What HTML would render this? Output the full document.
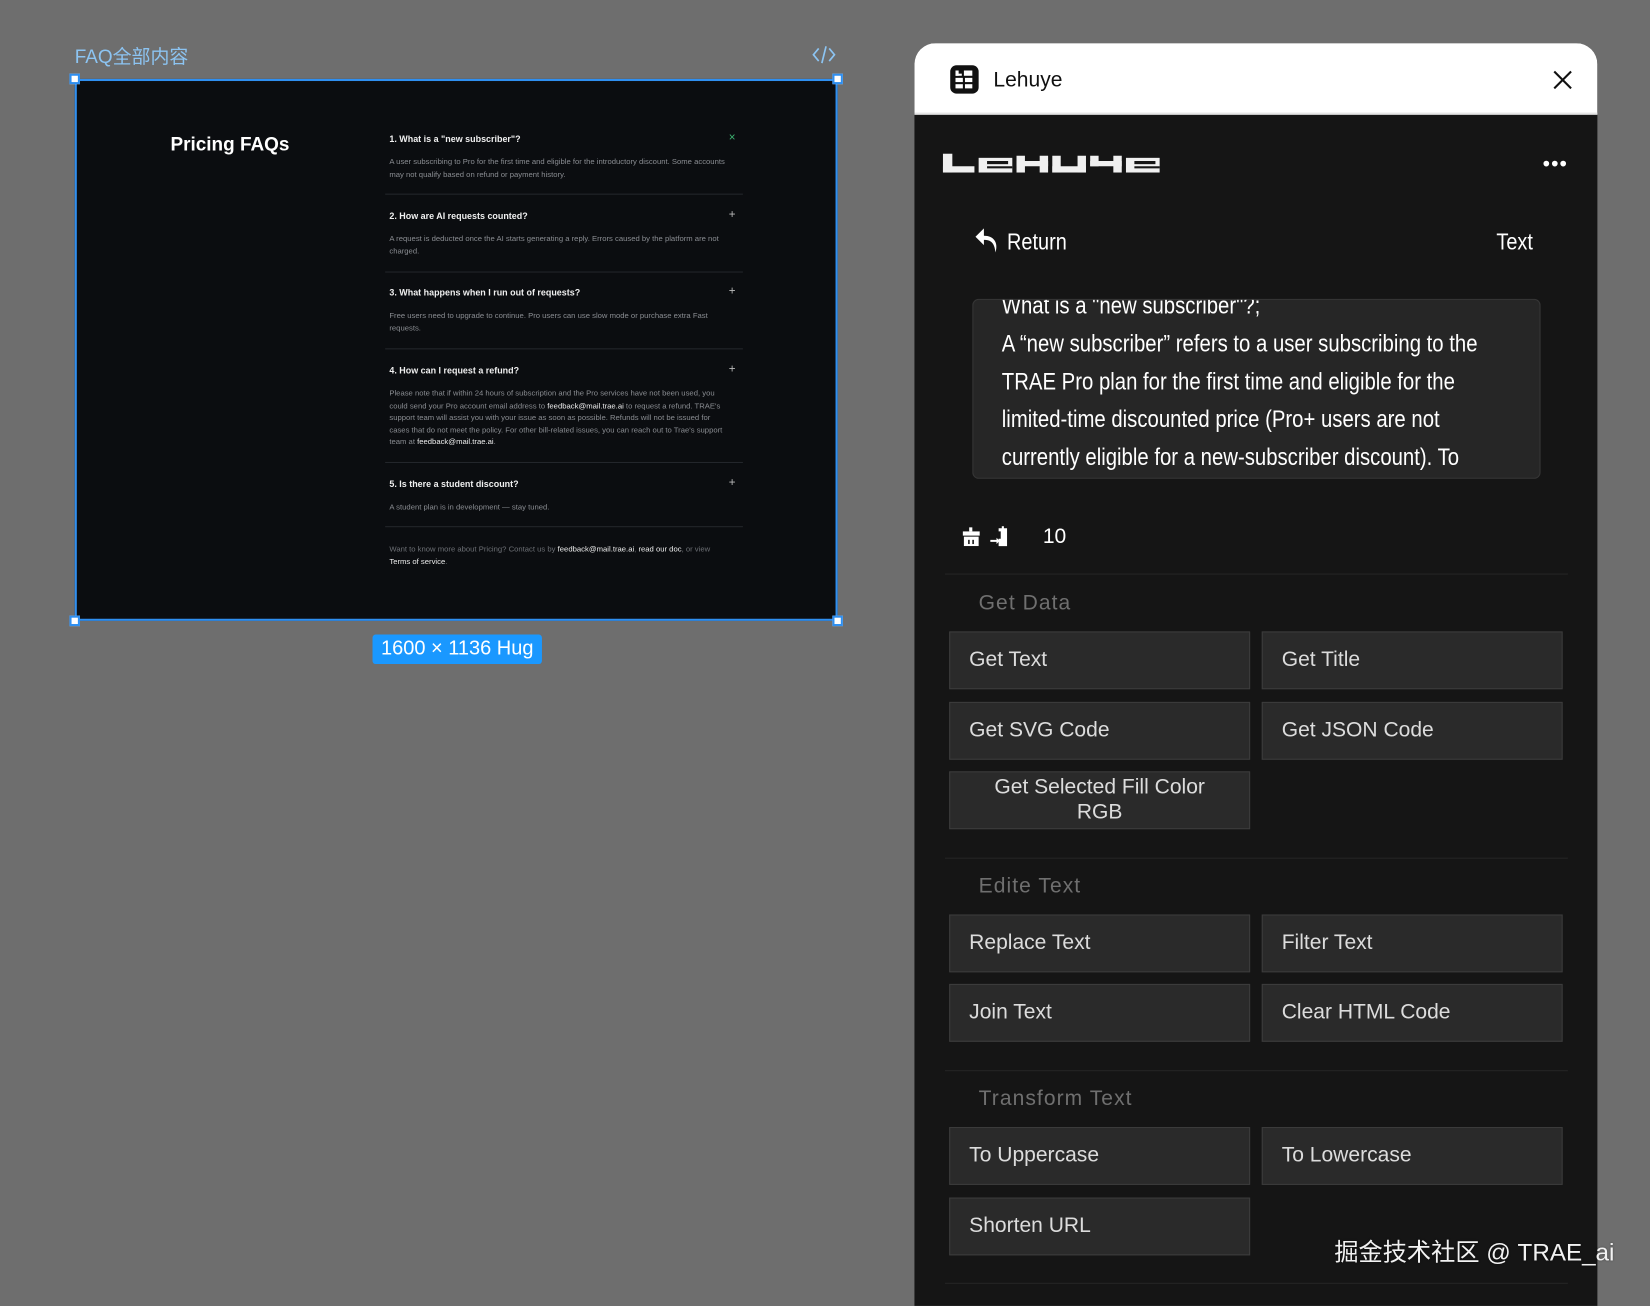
<!DOCTYPE html>
<html><head><meta charset="utf-8">
<style>
*{margin:0;padding:0;box-sizing:border-box}
html,body{width:1650px;height:1294px;overflow:hidden;background:#6e6e6e}
#w{position:absolute;left:0;top:0;width:1568px;height:1230px;transform:scale(1.05230);transform-origin:0 0;font-family:"Liberation Sans",Arial,sans-serif}
.a{position:absolute}
.lbl{left:71px;top:40px;color:#8cc4f2;font-size:18px;font-family:"Liberation Sans","Noto Sans CJK SC",sans-serif}
.frame{left:71px;top:75px;width:725px;height:515px;background:#0b0d10;border:2px solid #2f8ff0}
.h{width:10px;height:10px;background:#fff;border:2px solid #2f8ff0}
.q{position:absolute;left:297px;width:335px;font-size:8.5px;color:#f0f0f0;font-weight:bold}
.q .p{position:absolute;right:6px;top:-2px;font-weight:normal;font-size:11px;color:#bbb}
.an{position:absolute;left:297px;width:326px;font-size:7.3px;line-height:11.5px;color:#8a8d92}
.an b{color:#eee;font-weight:normal}
.dv{position:absolute;left:293px;width:340px;height:1px;background:#23262b}
.panel{left:869px;top:41px;width:649px;height:1200px;background:#151515;border-radius:20px 20px 0 0;overflow:hidden}
.hdr{position:absolute;left:0;top:0;width:649px;height:68px;background:#fff;border-bottom:2px solid #e6e6e6}
.btn{position:absolute;width:286px;height:55px;background:#2a2a2a;border:1px solid #3c3c3c;color:#dcdcdc;font-size:20px;line-height:53px;padding-left:18px}
.sec{position:absolute;left:61px;color:#6f6f6f;font-size:20px;letter-spacing:1px}
.hr{position:absolute;left:29px;width:592px;height:1px;background:#252525}
.nar{display:inline-block;transform:scaleX(0.86);transform-origin:0 0}
</style></head><body><div id="w">
<div class="a lbl">FAQ全部内容</div>
<svg class="a" style="left:771px;top:42px" width="24" height="20" viewBox="0 0 24 20" fill="none" stroke="#8cc4f2" stroke-width="1.6"><path d="M7 4 2 10l5 6M17 4l5 6-5 6M14 2 10 18"/></svg>
<div class="a frame">
 <div class="a" style="left:89px;top:50px;color:#fff;font-size:18px;font-weight:bold">Pricing FAQs</div>
 <div class="q" style="top:50px">1. What is a "new subscriber"?<span class="p" style="color:#3cb371">×</span></div>
 <div class="an" style="top:71px">A user subscribing to Pro for the first time and eligible for the introductory discount. Some accounts may not qualify based on refund or payment history.</div>
 <div class="dv" style="top:107px"></div>
 <div class="q" style="top:123px">2. How are AI requests counted?<span class="p">+</span></div>
 <div class="an" style="top:144px">A request is deducted once the AI starts generating a reply. Errors caused by the platform are not charged.</div>
 <div class="dv" style="top:181px"></div>
 <div class="q" style="top:196px">3. What happens when I run out of requests?<span class="p">+</span></div>
 <div class="an" style="top:217px">Free users need to upgrade to continue. Pro users can use slow mode or purchase extra Fast requests.</div>
 <div class="dv" style="top:254px"></div>
 <div class="q" style="top:270px">4. How can I request a refund?<span class="p">+</span></div>
 <div class="an" style="top:291px">Please note that if within 24 hours of subscription and the Pro services have not been used, you could send your Pro account email address to <b>feedback@mail.trae.ai</b> to request a refund. TRAE's support team will assist you with your issue as soon as possible. Refunds will not be issued for cases that do not meet the policy. For other bill-related issues, you can reach out to Trae's support team at <b>feedback@mail.trae.ai</b>.</div>
 <div class="dv" style="top:362px"></div>
 <div class="q" style="top:378px">5. Is there a student discount?<span class="p">+</span></div>
 <div class="an" style="top:399px">A student plan is in development — stay tuned.</div>
 <div class="dv" style="top:423px"></div>
 <div class="an" style="top:439px;color:#6d7075">Want to know more about Pricing? Contact us by <b>feedback@mail.trae.ai</b>, <b>read our doc</b>, or view <b>Terms of service</b>.</div>
</div>
<div class="a h" style="left:66px;top:70px"></div><div class="a h" style="left:791px;top:70px"></div>
<div class="a h" style="left:66px;top:585px"></div><div class="a h" style="left:791px;top:585px"></div>
<div class="a" style="left:354px;top:603px;width:161px;height:28px;background:#1a98ff;border-radius:3px;color:#fff;font-size:19px;line-height:28px;text-align:center">1600 × 1136 Hug</div>

<div class="a panel">
 <div class="hdr">
  <div class="a" style="left:34px;top:21px;width:27px;height:27px;background:#111;border-radius:6px"></div>
  <svg class="a" style="left:37px;top:24px" width="21" height="21" viewBox="0 0 21 21" fill="#fff"><rect x="2" y="2" width="3" height="5"/><rect x="2" y="5" width="6" height="2"/><rect x="10" y="2" width="8" height="5"/><rect x="2" y="9" width="7" height="4"/><rect x="11" y="9" width="7" height="4"/><rect x="2" y="15" width="7" height="4"/><rect x="11" y="15" width="7" height="4"/></svg>
  <div class="a" style="left:75px;top:24px;font-size:20px;color:#111">Lehuye</div>
  <svg class="a" style="left:606px;top:25px" width="20" height="20" viewBox="0 0 20 20" stroke="#111" stroke-width="2"><path d="M2 2 18 18M18 2 2 18"/></svg>
 </div>
 <svg class="a" style="left:27px;top:105px" width="207" height="18" viewBox="0 0 207 18" fill="#f0f0f0">
  <rect x="0" y="0" width="9" height="18"/><rect x="0" y="12" width="30" height="6"/>
  <rect x="34" y="4" width="32" height="14"/><rect x="42" y="7" width="20" height="3" fill="#151515"/><rect x="42" y="12" width="24" height="2" fill="#151515"/>
  <rect x="70" y="2" width="8" height="16"/><rect x="70" y="7" width="30" height="5"/><rect x="92" y="2" width="8" height="16"/>
  <rect x="104" y="2" width="8" height="16"/><rect x="104" y="12" width="32" height="6"/><rect x="128" y="2" width="8" height="16"/>
  <rect x="140" y="2" width="8" height="10"/><rect x="140" y="7" width="30" height="5"/><rect x="162" y="2" width="8" height="16"/>
  <rect x="174" y="4" width="32" height="14"/><rect x="182" y="7" width="20" height="3" fill="#151515"/><rect x="182" y="12" width="24" height="2" fill="#151515"/>
 </svg>
 <div class="a" style="left:597px;top:104px;color:#fff;font-size:20px;letter-spacing:1px">•••</div>
 <svg class="a" style="left:57px;top:175px" width="24" height="26" viewBox="0 0 24 26" fill="#fff"><path d="M9 1 1 9l8 8v-5c6 0 10 2 11 12 3-10-2-16-11-16V1z"/></svg>
 <div class="a" style="left:88px;top:176px;color:#fff;font-size:22px"><span class="nar">Return</span></div>
 <div class="a" style="left:553px;top:176px;color:#fff;font-size:22px"><span class="nar">Text</span></div>
 <div class="a" style="left:55px;top:243px;width:540px;height:171px;background:#262626;border:1px solid #363636;border-radius:6px;overflow:hidden">
  <div style="position:absolute;left:27px;top:-13px;width:540px;color:#fff;font-size:23px;line-height:36px;transform:scaleX(0.84);transform-origin:0 0">What is a "new subscriber"?;<br>A “new subscriber” refers to a user subscribing to the<br>TRAE Pro plan for the first time and eligible for the<br>limited-time discounted price (Pro+ users are not<br>currently eligible for a new-subscriber discount). To</div>
 </div>
 <svg class="a" style="left:45px;top:460px" width="18" height="18" viewBox="0 0 18 18" fill="#fff"><rect x="7" y="0" width="3" height="4"/><rect x="1" y="4" width="16" height="4"/><rect x="2" y="9" width="14" height="9"/><rect x="6" y="12" width="1.5" height="4" fill="#151515"/><rect x="10" y="12" width="1.5" height="4" fill="#151515"/></svg>
 <svg class="a" style="left:72px;top:459px" width="20" height="20" viewBox="0 0 20 20" fill="#fff"><path d="M8 2h3V0h2v2h3v17H8v-7h2V5H8z"/><path d="M0 13h6v-2l3 3-3 3v-2H0z"/></svg>
 <div class="a" style="left:122px;top:458px;color:#fff;font-size:20px">10</div>
 <div class="hr" style="top:504px"></div>
 <div class="sec" style="top:521px">Get Data</div>
 <div class="btn" style="left:33px;top:559px">Get Text</div>
 <div class="btn" style="left:330px;top:559px">Get Title</div>
 <div class="btn" style="left:33px;top:626px">Get SVG Code</div>
 <div class="btn" style="left:330px;top:626px">Get JSON Code</div>
 <div class="btn" style="left:33px;top:692px;line-height:24px;padding:2px 0 0;text-align:center">Get Selected Fill Color<br>RGB</div>
 <div class="hr" style="top:774px"></div>
 <div class="sec" style="top:790px">Edite Text</div>
 <div class="btn" style="left:33px;top:828px">Replace Text</div>
 <div class="btn" style="left:330px;top:828px">Filter Text</div>
 <div class="btn" style="left:33px;top:894px">Join Text</div>
 <div class="btn" style="left:330px;top:894px">Clear HTML Code</div>
 <div class="hr" style="top:976px"></div>
 <div class="sec" style="top:992px">Transform Text</div>
 <div class="btn" style="left:33px;top:1030px">To Uppercase</div>
 <div class="btn" style="left:330px;top:1030px">To Lowercase</div>
 <div class="btn" style="left:33px;top:1097px">Shorten URL</div>
 <div class="hr" style="top:1178px"></div>
</div>
<div class="a" style="left:1268px;top:1171px;color:#f2f2f2;font-size:23px;font-family:'Liberation Sans','Noto Sans CJK SC',sans-serif;text-shadow:0 0 2px rgba(0,0,0,.4)">掘金技术社区 @ TRAE_ai</div>
</div></body></html>
